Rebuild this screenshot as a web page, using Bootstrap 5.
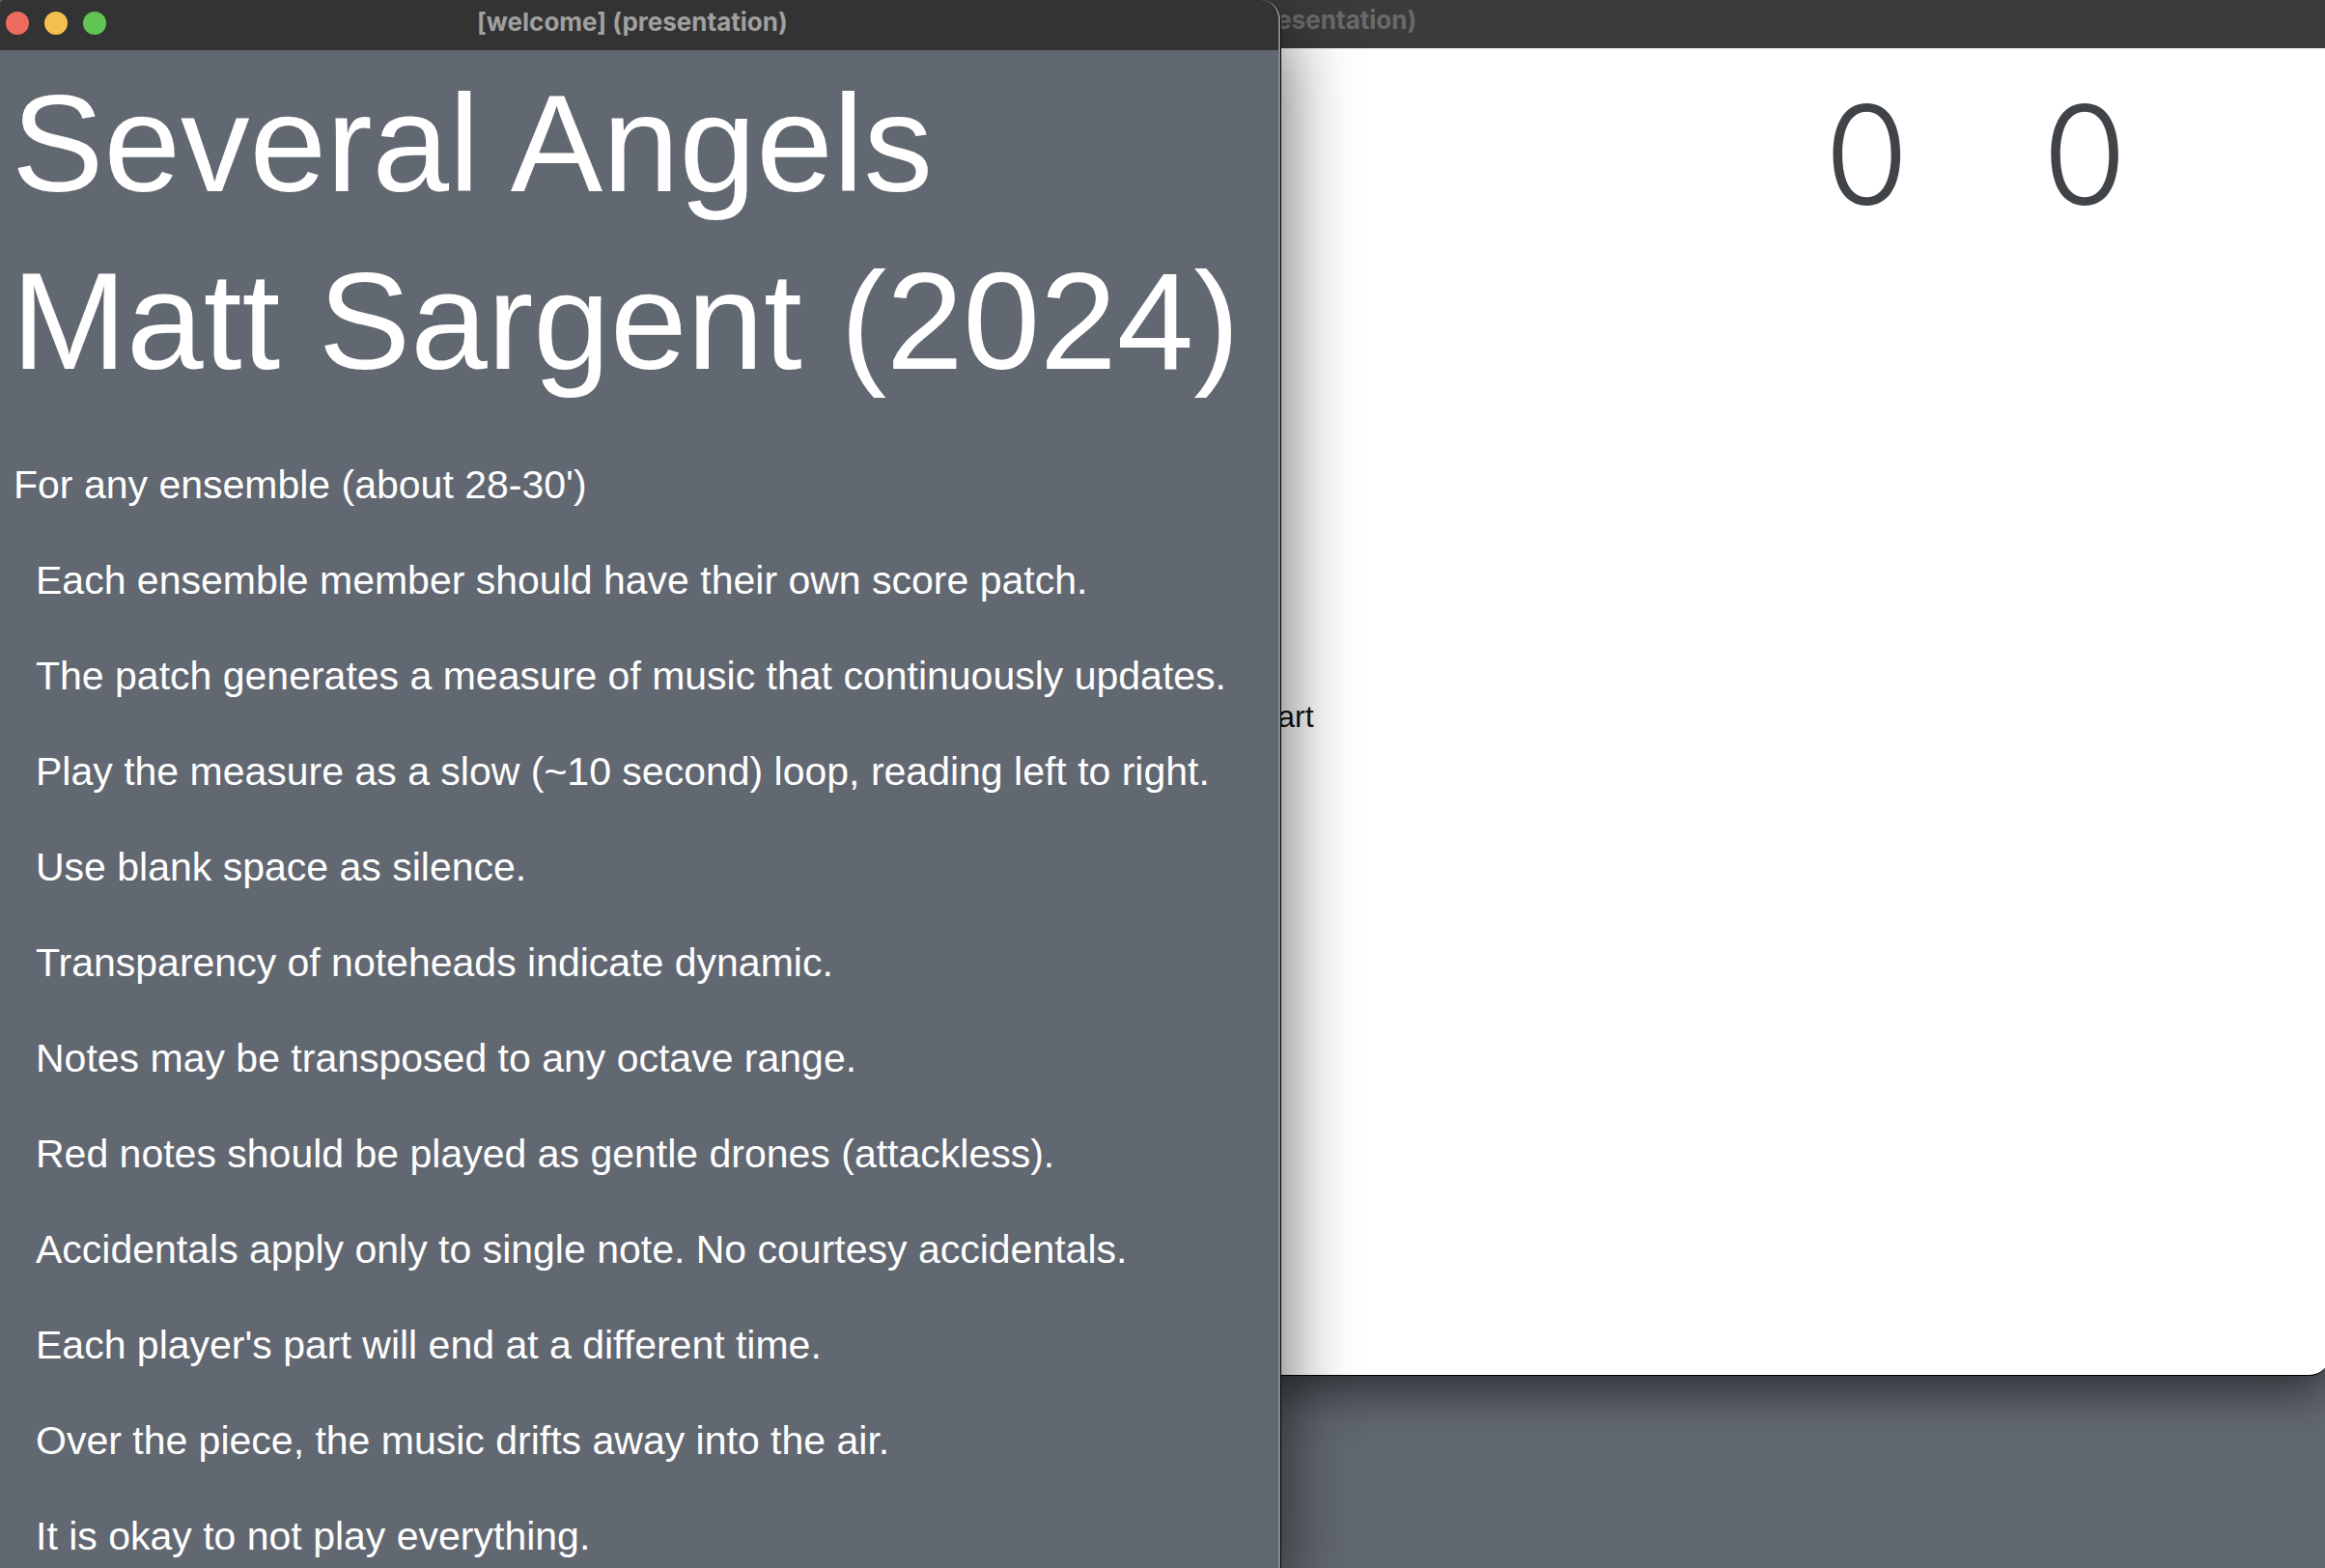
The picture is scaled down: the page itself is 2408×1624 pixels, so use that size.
<!DOCTYPE html>
<html lang="en">
<head>
<meta charset="utf-8">
<meta name="viewport" content="width=device-width, initial-scale=1">
<title>Several Angels</title>
<link rel="stylesheet" href="https://cdn.jsdelivr.net/npm/bootstrap@5.3.0/dist/css/bootstrap.min.css">
<style>
  body { background: #626871; font-family: "Liberation Sans", Arial, sans-serif; }
  .desk { background: #626871; }
  /* back window: the score */
  .score-win { top: 0; left: 54%; right: -4px; height: 1425px; background: #fff; border-bottom: 1px solid #000; border-radius: 0 0 20px 0; box-shadow: 0 16px 50px rgba(0,0,0,.55); }
  .score-bar { height: 50px; background: #3b3b3b; color: #6a6a6a; padding-left: 22px; }
  .bar-text { font: 700 26px/30px Inter, sans-serif; }
  .score-bar .bar-text { margin-top: 6px; }
  .counters { padding: 12px 209px 0 0; gap: 138px; font: 300 142px/196px Inter, sans-serif; color: #404448; }
  .part-label { font-size: 32px; line-height: 40px; color: #111; padding-left: 23px; margin-top: 464px; }
  /* front window: welcome */
  .welcome-win { top: 0; left: 0; width: 55.1%; background: #626871; border-right: 1px solid #000; border-radius: 4px 20px 0 0; box-shadow: 0 30px 76px rgba(0,0,0,.65); }
  .welcome-inner { border-right: 2px solid #858a92; border-radius: 4px 20px 0 0; }
  .welcome-bar { height: 52px; background: #333; color: #a0a0a0; padding-left: 6px; border-radius: 4px 18px 0 0; }
  .dots { gap: 16px; padding-top: 12px; }
  .dot { width: 24px; height: 24px; border: 0; padding: 0; border-radius: 50%; }
  .dot-r { background: #ed6a5e; } .dot-y { background: #f4bf4f; } .dot-g { background: #61c554; }
  .welcome-bar .bar-text { margin: 8px 0 0 384px; }
  .welcome-body { color: #fff; padding: 5px 0 0 14px; }
  .big-title { font-size: 143px; line-height: 184px; font-weight: 400; margin: 0 0 0 -2px; }
  .notes-text { font-size: 41px; line-height: 51px; }
  .notes-lead { margin: 52px 0 48px; }
  .notes-list { gap: 48px; padding-left: 23px; }
</style>
<script src="https://cdn.jsdelivr.net/npm/bootstrap@5.3.0/dist/js/bootstrap.bundle.min.js"></script>
</head>
<body>
<div class="desk position-relative vh-100 overflow-hidden">
  <section class="score-win position-absolute overflow-visible">
    <header class="score-bar d-flex"><span class="bar-text text-nowrap">esentation)</span></header>
    <div class="counters d-flex justify-content-end"><span>0</span><span>0</span></div>
    <div class="part-label">art</div>
  </section>
  <section class="welcome-win position-absolute h-100">
    <div class="welcome-inner h-100 overflow-hidden">
      <header class="welcome-bar d-flex align-items-start">
        <div class="dots d-flex">
          <button type="button" class="dot dot-r" aria-label="Close"></button>
          <button type="button" class="dot dot-y" aria-label="Minimize"></button>
          <button type="button" class="dot dot-g" aria-label="Zoom"></button>
        </div>
        <span class="bar-text text-nowrap">[welcome] (presentation)</span>
      </header>
      <main class="welcome-body text-nowrap">
        <h1 class="big-title">Several Angels<br>Matt Sargent (2024)</h1>
        <p class="notes-text notes-lead">For any ensemble (about 28-30')</p>
        <ul class="notes-text notes-list list-unstyled d-flex flex-column mb-0">
          <li>Each ensemble member should have their own score patch.</li>
          <li>The patch generates a measure of music that continuously updates.</li>
          <li>Play the measure as a slow (~10 second) loop, reading left to right.</li>
          <li>Use blank space as silence.</li>
          <li>Transparency of noteheads indicate dynamic.</li>
          <li>Notes may be transposed to any octave range.</li>
          <li>Red notes should be played as gentle drones (attackless).</li>
          <li>Accidentals apply only to single note. No courtesy accidentals.</li>
          <li>Each player's part will end at a different time.</li>
          <li>Over the piece, the music drifts away into the air.</li>
          <li>It is okay to not play everything.</li>
        </ul>
      </main>
    </div>
  </section>
</div>
</body>
</html>
